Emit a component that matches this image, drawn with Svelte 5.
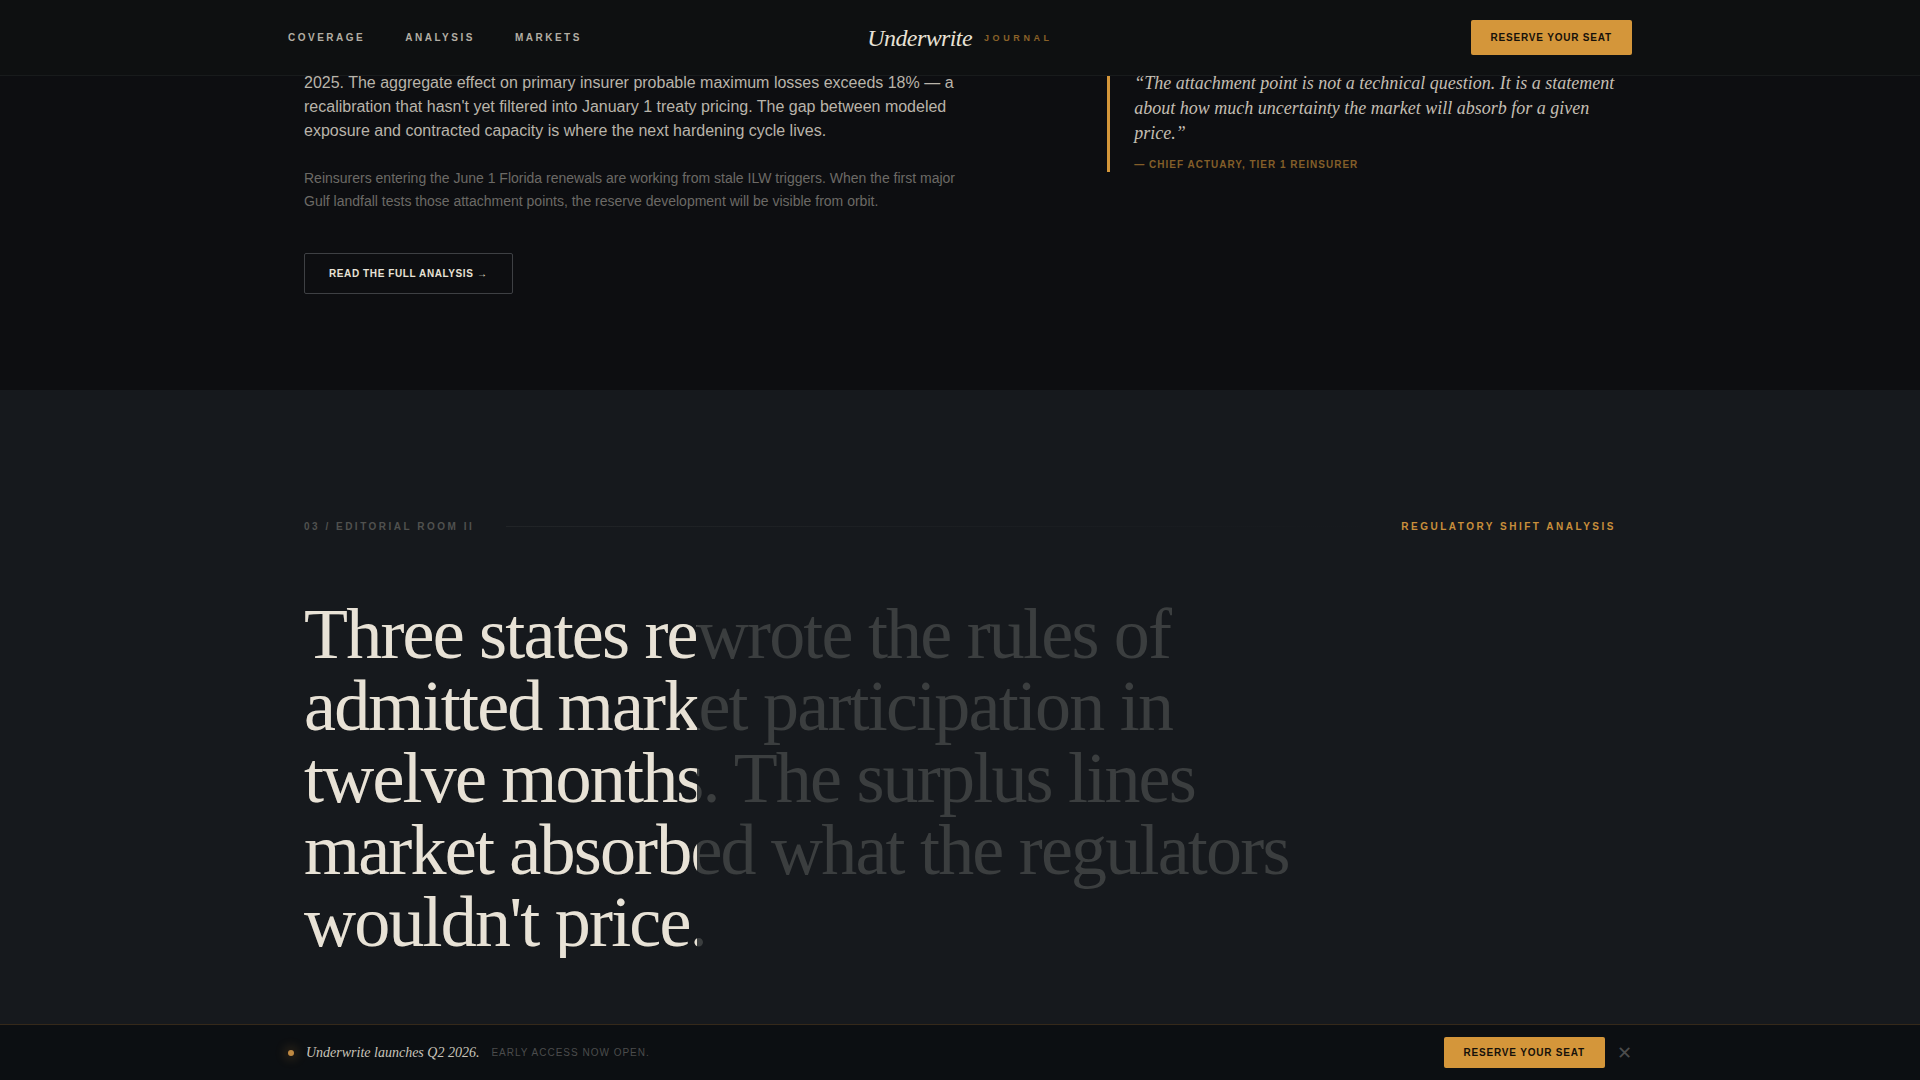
<script>
  let revealed = 39.3;
  let bannerOpen = true;

  const links = ['Coverage', 'Analysis', 'Markets'];
  const headline =
    "Three states rewrote the rules of admitted market participation in twelve months. The surplus lines market absorbed what the regulators wouldn't price.";
</script>

<header class="topbar">
  <div class="bar-inner">
    <nav class="links" aria-label="Sections">
      {#each links as link}
        <a href="#{link.toLowerCase()}">{link}</a>
      {/each}
    </nav>
    <a class="brand" href="#top">
      <span class="brand-name">Underwrite</span>
      <span class="brand-sub">Journal</span>
    </a>
    <div class="topbar-end">
      <button class="cta" type="button">Reserve your seat</button>
    </div>
  </div>
</header>

<main>
  <section class="room room-one">
    <div class="wrap columns">
      <div class="story">
        <p class="lead">
          2025. The aggregate effect on primary insurer probable maximum losses exceeds 18% — a
          recalibration that hasn't yet filtered into January 1 treaty pricing. The gap between
          modeled exposure and contracted capacity is where the next hardening cycle lives.
        </p>
        <p class="note">
          Reinsurers entering the June 1 Florida renewals are working from stale ILW triggers. When
          the first major Gulf landfall tests those attachment points, the reserve development will
          be visible from orbit.
        </p>
        <button class="outline" type="button">Read the full analysis →</button>
      </div>
      <figure class="quote">
        <blockquote>
          “The attachment point is not a technical question. It is a statement about how much
          uncertainty the market will absorb for a given price.”
        </blockquote>
        <figcaption>— Chief Actuary, Tier 1 Reinsurer</figcaption>
      </figure>
    </div>
  </section>

  <section class="room room-two">
    <div class="wrap">
      <div class="eyebrow">
        <span class="room-label">03 / Editorial Room II</span>
        <span class="rule"></span>
        <span class="topic">Regulatory Shift Analysis</span>
      </div>
      <h2 class="headline">
        <span class="ghost">{headline}</span>
        <span class="lit" aria-hidden="true" style="clip-path: inset(0 {100 - revealed}% 0 0)">{headline}</span>
      </h2>
    </div>
  </section>
</main>

{#if bannerOpen}
  <aside class="banner">
    <div class="bar-inner">
      <div class="banner-text">
        <span class="dot"></span>
        <span class="launch">Underwrite launches Q2 2026.</span>
        <span class="access">Early access now open.</span>
      </div>
      <div class="banner-actions">
        <button class="cta small" type="button">Reserve your seat</button>
        <button class="close" type="button" aria-label="Dismiss" on:click={() => (bannerOpen = false)}>✕</button>
      </div>
    </div>
  </aside>
{/if}

<style>
  :global(body) {
    background: #0d0e11;
    color: #e8e2d6;
    font-family: 'Liberation Sans', Arial, sans-serif;
    overflow: hidden;
  }

  button {
    font-family: inherit;
    cursor: pointer;
  }

  p, h2, figure, blockquote {
    margin: 0;
  }

  .topbar, .banner {
    position: fixed;
    left: 0;
    right: 0;
    z-index: 10;
  }

  .topbar {
    top: 0;
    background: #0e1011;
    border-bottom: 1px solid #181b1c;
  }

  .bar-inner {
    max-width: 1344px;
    margin: 0 auto;
    padding: 20px 48px;
    display: flex;
    align-items: center;
    justify-content: space-between;
  }

  .topbar .bar-inner {
    display: grid;
    grid-template-columns: 1fr auto 1fr;
  }

  .links {
    display: flex;
    gap: 40px;
  }

  .links a {
    color: #b3aea4;
    font-size: 10px;
    font-weight: 700;
    letter-spacing: 0.25em;
    text-transform: uppercase;
    text-decoration: none;
  }

  .brand {
    display: flex;
    align-items: center;
    gap: 12px;
    text-decoration: none;
  }

  .brand-name {
    color: #e8e2d6;
    font-family: 'Liberation Serif', 'Times New Roman', serif;
    font-size: 24px;
    font-style: italic;
    line-height: 28px;
    letter-spacing: -0.025em;
  }

  .brand-sub {
    color: #8a6228;
    font-size: 9px;
    font-weight: 700;
    letter-spacing: 0.4em;
    text-transform: uppercase;
  }

  .topbar-end {
    display: flex;
    justify-content: flex-end;
  }

  .cta {
    padding: 12px 20px;
    border: 0;
    border-radius: 2px;
    background: #d4963a;
    color: #16110a;
    font-size: 10px;
    font-weight: 700;
    line-height: 11px;
    letter-spacing: 0.08em;
    text-transform: uppercase;
  }

  .cta.small {
    padding: 10px 20px;
  }

  .wrap {
    max-width: 1312px;
    margin: 0 auto;
    padding: 0 64px;
  }

  .room-one {
    padding: 71px 0 96px;
  }

  .columns {
    display: grid;
    grid-template-columns: repeat(12, minmax(0, 1fr));
    gap: 24px;
    align-items: start;
  }

  .story {
    grid-column: span 7;
    max-width: 660px;
  }

  .lead {
    color: #b9b4aa;
    font-size: 16px;
    line-height: 24px;
  }

  .note {
    margin-top: 24px;
    color: #6c6a66;
    font-size: 14px;
    line-height: 23px;
  }

  .outline {
    margin-top: 40px;
    padding: 14px 24px;
    border: 1px solid #3e4044;
    border-radius: 2px;
    background: transparent;
    color: #e8e2d6;
    font-size: 10px;
    font-weight: 700;
    line-height: 11px;
    letter-spacing: 0.06em;
    text-transform: uppercase;
  }

  .quote {
    grid-column: span 5;
    margin-left: 24px;
    padding-left: 24px;
    border-left: 3px solid #d4963a;
  }

  blockquote {
    color: #c4beb3;
    font-family: 'Liberation Serif', 'Times New Roman', serif;
    font-size: 18px;
    font-style: italic;
    line-height: 25px;
  }

  figcaption {
    margin-top: 12px;
    color: #835e29;
    font-size: 10px;
    font-weight: 700;
    line-height: 14px;
    letter-spacing: 0.1em;
    text-transform: uppercase;
  }

  .room-two {
    padding: 128px 0;
    background: #16191d;
  }

  .eyebrow {
    display: flex;
    align-items: center;
    gap: 32px;
    font-size: 10px;
    font-weight: 700;
    line-height: 17px;
    letter-spacing: 0.25em;
    text-transform: uppercase;
  }

  .room-label {
    color: #50514f;
  }

  .topic {
    color: #c98f3b;
  }

  .rule {
    flex: 1;
    height: 1px;
    background: linear-gradient(90deg, #212427, #16191d);
  }

  .headline {
    position: relative;
    max-width: 1000px;
    margin-top: 63px;
    overflow: hidden;
    font-family: 'Liberation Serif', 'Times New Roman', serif;
    font-size: 72px;
    font-weight: 400;
    line-height: 72px;
    letter-spacing: -0.025em;
  }

  .ghost {
    display: block;
    color: #3b3e3f;
  }

  .lit {
    position: absolute;
    inset: 0;
    color: #e8e2d6;
  }

  .banner {
    bottom: 0;
    background: #0c0f12;
    border-top: 1px solid #35291a;
  }

  .banner .bar-inner {
    padding: 12px 48px;
  }

  .banner-text, .banner-actions {
    display: flex;
    align-items: center;
    gap: 12px;
  }

  .dot {
    width: 6px;
    height: 6px;
    border-radius: 50%;
    background: #c08a42;
    box-shadow: 0 0 12px 2px rgba(212, 150, 58, 0.3);
  }

  .launch {
    color: #c9c4ba;
    font-family: 'Liberation Serif', 'Times New Roman', serif;
    font-size: 14px;
    font-style: italic;
  }

  .access {
    color: #4b4c4c;
    font-size: 10px;
    letter-spacing: 0.1em;
    text-transform: uppercase;
  }

  .close {
    padding: 0;
    border: 0;
    background: transparent;
    color: #4b4c4c;
    font-size: 18px;
    line-height: 20px;
  }
</style>
